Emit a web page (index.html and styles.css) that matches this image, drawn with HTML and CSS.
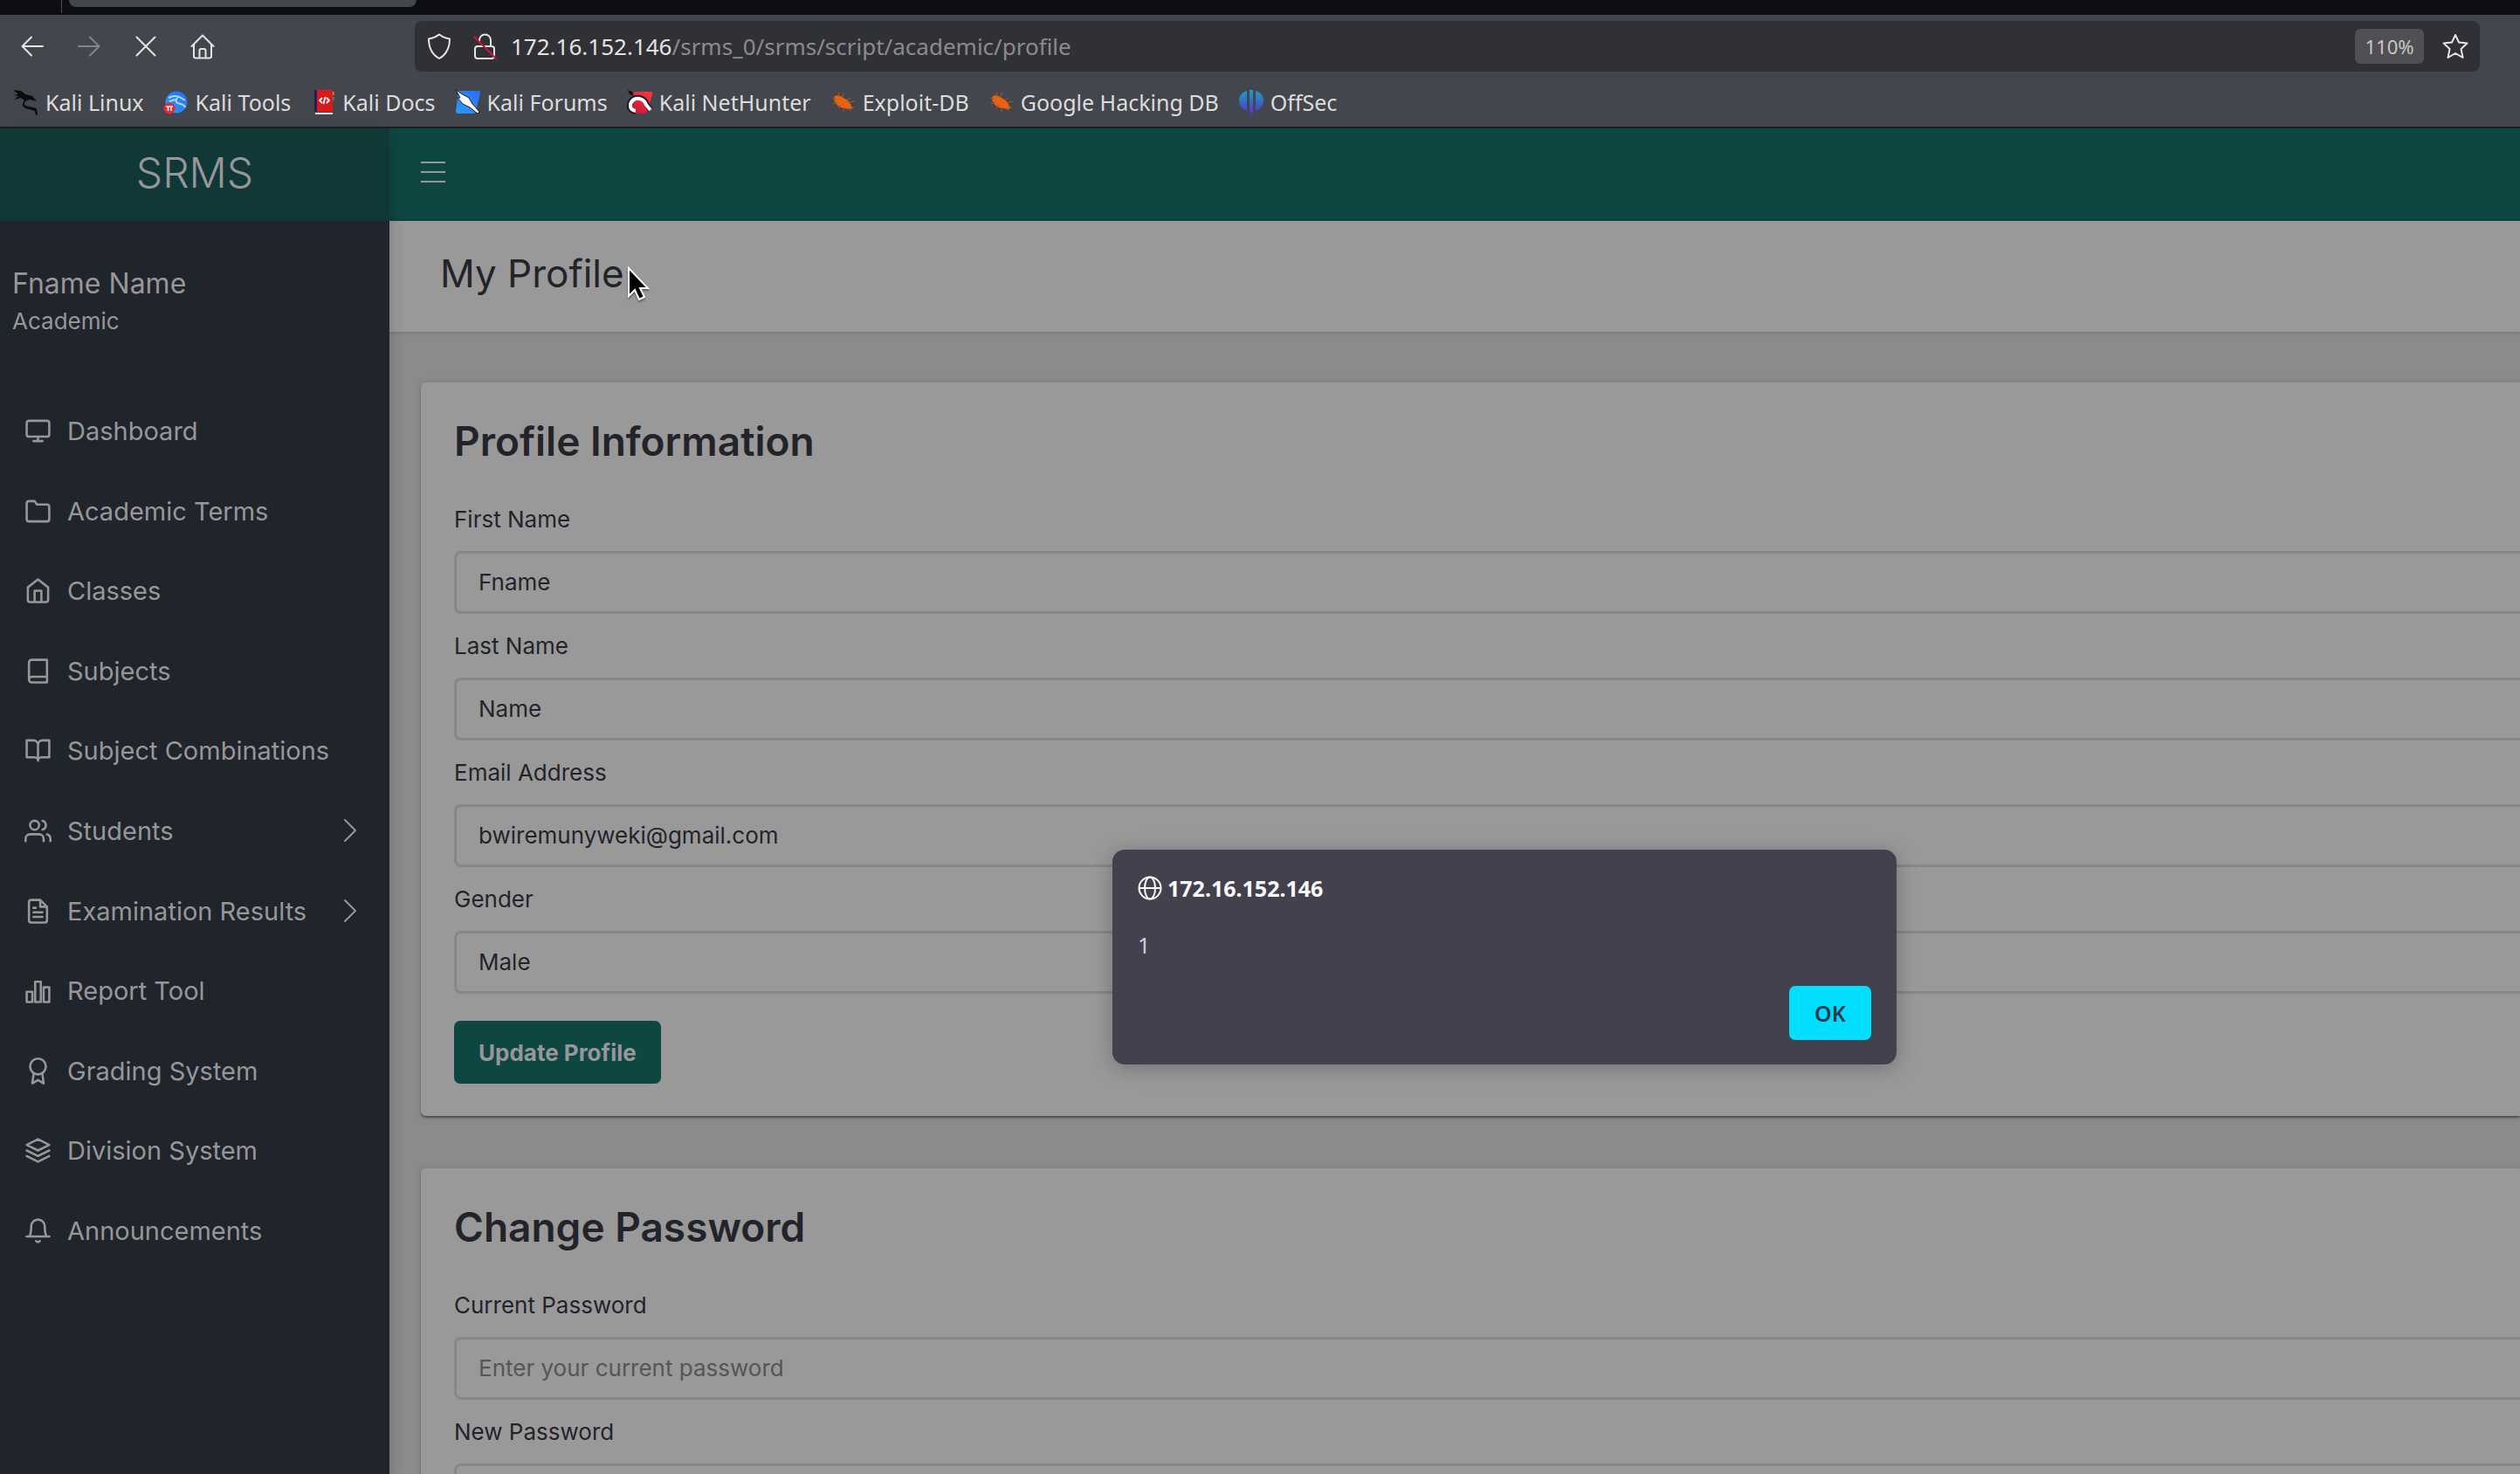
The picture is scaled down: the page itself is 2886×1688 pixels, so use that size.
FILE: index.html
```html
<!DOCTYPE html>
<html lang="en">
<head>
<meta charset="utf-8">
<title>My Profile - SRMS</title>
<link rel="stylesheet" href="styles.css">
</head>
<body>
<svg class="defs" aria-hidden="true">
  <defs>
    <linearGradient id="blue" x1="1" y1="0" x2="0" y2="1"><stop offset="0" stop-color="#2a6cf5"/><stop offset="1" stop-color="#2a9df5"/></linearGradient>
    <linearGradient id="red" x1="1" y1="0" x2="0" y2="1"><stop offset="0" stop-color="#ff3a3a"/><stop offset="1" stop-color="#c0103c"/></linearGradient>
    <linearGradient id="violet" x1="0" y1="0" x2="0" y2="1"><stop offset="0" stop-color="#17a2bd"/><stop offset="1" stop-color="#5b2bd0"/></linearGradient>
    <symbol id="bug" viewBox="0 0 30 30"><path d="M5 8q5-2 10 2q7 3 10 12q-3 2-7 0q-8 0-12-6q-3-4-1-8z" fill="#eb6112"/><path d="M2 10l5 2M3 17l5-2M9 22l3-4M15 26l1-5M23 25l-1-4M27 22l-4-3M28 14l-6 1M23 10l-4 3M16 4l-3 6M9 4l1 5" stroke="#b0562a" stroke-width="1" fill="none"/></symbol>
    <symbol id="chevron" viewBox="0 0 18 28"><path d="M3 2l12 12L3 26" fill="none" stroke="currentColor" stroke-width="2"/></symbol>
  </defs>
</svg>

<header class="browser">
  <div class="tabs"><span class="tab-divider"></span><span class="tab"></span></div>
  <div class="toolbar">
    <div class="nav-buttons">
      <button type="button" aria-label="Back"><svg viewBox="0 0 32 32"><path d="M28 16H5M15 5.500L4.500 16 15 26.500"/></svg></button>
      <button type="button" aria-label="Forward" disabled><svg viewBox="0 0 32 32"><path d="M4 16h23M17 5.500L27.500 16 17 26.500"/></svg></button>
      <button type="button" aria-label="Stop"><svg viewBox="0 0 32 32"><path d="M5.500 5.500l21 21M26.500 5.500l-21 21"/></svg></button>
      <button type="button" aria-label="Home"><svg viewBox="0 0 32 32"><path d="M3.500 16L16 3.500 28.500 16M6 14v13.500a2 2 0 0 0 2 2h16a2 2 0 0 0 2-2V14M12.500 29v-8a2 2 0 0 1 2-2h3a2 2 0 0 1 2 2v8"/></svg></button>
    </div>
    <div class="urlbar">
      <div class="url-group">
        <svg class="url-icon" viewBox="0 0 32 32"><path d="M16 2.500c4 3 8 4.500 12 5 0 10-3 17.500-12 22.500C7 25 4 17.500 4 7.500c4-.5 8-2 12-5z"/></svg>
        <svg class="url-icon" viewBox="0 0 32 32"><path d="M10 10V9a6.500 6.500 0 0 1 13 0v7M7 16h17a3 3 0 0 1 3 3v8a3 3 0 0 1-3 3H8a3 3 0 0 1-3-3v-8a3 3 0 0 1 3-3z"/><path class="slash" d="M4 5l25 25"/></svg>
      </div>
      <div class="url" role="textbox" aria-label="Address"><span class="host">172.16.152.146</span>/srms_0/srms/script/academic/profile</div>
      <div class="url-group">
        <button type="button" class="zoom">110%</button>
        <button type="button" class="star" aria-label="Bookmark"><svg class="url-icon" viewBox="0 0 32 32"><path d="M16 3l4 8.500 9.500 1-7 6.500 2 10L16 24l-8.500 5 2-10-7-6.500 9.500-1z"/></svg></button>
      </div>
    </div>
  </div>
  <nav class="bookmarks">
    <a href="#"><svg viewBox="0 0 30 30"><path d="M0 1l9 1 5 4 8 2 5 6-8-2-3 1q-5 3-2 6l9 2q5 2 5 8l-3-4-11-3q-6-4-1-9l-4-3-8 2 5-4-6-1 6-1z" fill="#0b0c0e"/><path d="M24 22l3 8-1-8z" fill="#0b0c0e" stroke="#0b0c0e"/></svg>Kali Linux</a>
    <a href="#"><svg viewBox="0 0 30 30"><circle cx="15" cy="15" r="12.500" fill="url(#blue)"/><path d="M6 10q8-4 14 0l5 3M16 10q-4 6 4 7 4 1 5 4M7 14l7-2" fill="none" stroke="#a9dcff" stroke-width="2"/><circle cx="7" cy="22" r="6.500" fill="#e8282e"/><path d="M3 20h8M5.500 20v5M9 20v5" stroke="#fff" stroke-width="1.500"/></svg>Kali Tools</a>
    <a href="#"><svg viewBox="0 0 30 30"><path d="M5 1h21v25H5z" fill="#d9191b"/><path d="M5 1h3v25H5z" fill="#1c2158"/><path d="M26 3h1.500v4H26z" fill="#e88a1c"/><path d="M26 9h1.500v4H26z" fill="#3aa14c"/><path d="M6 27h20v2H6z" fill="#e8e3e3"/><path d="M14 10l-3 3 3 3M17.500 9l-2 8M19 10l3 3-3 3" stroke="#fff" stroke-width="1.800" fill="none"/></svg>Kali Docs</a>
    <a href="#"><svg viewBox="0 0 30 30"><path d="M4 2h23q3 0 2 3l-5 20q-1 3-3 3H4q-3 0-3-3z" fill="url(#blue)"/><path d="M1 1l6 4 9 5 4 7 8 9-2 2-9-7-8-4-6-7 3 0z" fill="#fff" stroke="#1b1d22" stroke-width="1"/></svg>Kali Forums</a>
    <a href="#"><svg viewBox="0 0 30 30"><path d="M8 3h19q3 0 2 3l-5 18q-1 4-4 4H4q-3 0-3-3z" fill="url(#red)"/><path d="M1 1l5 2 2 5-5-2z" fill="#111"/><path d="M10 26q-8-1-7-9 3-8 11-7 7 1 9 8l4 6" fill="none" stroke="#181a1e" stroke-width="6"/><path d="M10 25q-7-1-6-8 3-7 10-6 6 1 8 7l5 6" fill="none" stroke="#fff" stroke-width="4"/></svg>Kali NetHunter</a>
    <a href="#"><svg><use href="#bug"/></svg>Exploit-DB</a>
    <a href="#"><svg><use href="#bug"/></svg>Google Hacking DB</a>
    <a href="#"><svg viewBox="0 0 30 30"><path d="M10 2v23C4 23 1 18 1 13S4 4 10 2zM20 2v23c6-2 9-7 9-12s-3-9-9-11zM13 1h4v25l-2 4-2-4z" fill="url(#violet)"/></svg>OffSec</a>
  </nav>
</header>

<div class="app">
  <aside class="sidebar">
    <a class="logo" href="#">SRMS</a>
    <div class="user"><p class="user-name">Fname Name</p><p class="user-role">Academic</p></div>
    <nav>
      <ul class="menu">
        <li><a href="#"><svg viewBox="0 0 24 24"><rect x="2" y="3" width="20" height="14" rx="2"/><path d="M8 21h8M12 17v4"/></svg><span>Dashboard</span></a></li>
        <li><a href="#"><svg viewBox="0 0 24 24"><path d="M22 19a2 2 0 0 1-2 2H4a2 2 0 0 1-2-2V5a2 2 0 0 1 2-2h5l2 3h9a2 2 0 0 1 2 2z"/></svg><span>Academic Terms</span></a></li>
        <li><a href="#"><svg viewBox="0 0 24 24"><path d="M3 9l9-7 9 7v11a2 2 0 0 1-2 2H5a2 2 0 0 1-2-2zM9 22V12h6v10"/></svg><span>Classes</span></a></li>
        <li><a href="#"><svg viewBox="0 0 24 24"><path d="M4 19.500A2.500 2.500 0 0 1 6.500 17H20M6.500 2H20v20H6.500A2.500 2.500 0 0 1 4 19.500v-15A2.500 2.500 0 0 1 6.500 2z"/></svg><span>Subjects</span></a></li>
        <li><a href="#"><svg viewBox="0 0 24 24"><path d="M2 3h6a4 4 0 0 1 4 4v14a3 3 0 0 0-3-3H2zM22 3h-6a4 4 0 0 0-4 4v14a3 3 0 0 1 3-3h7z"/></svg><span>Subject Combinations</span></a></li>
        <li><a href="#"><svg viewBox="0 0 24 24"><path d="M17 21v-2a4 4 0 0 0-4-4H5a4 4 0 0 0-4 4v2M23 21v-2a4 4 0 0 0-3-3.870M16 3.130a4 4 0 0 1 0 7.750"/><circle cx="9" cy="7" r="4"/></svg><span>Students</span><svg class="chevron"><use href="#chevron"/></svg></a></li>
        <li><a href="#"><svg viewBox="0 0 24 24"><path d="M14 2H6a2 2 0 0 0-2 2v16a2 2 0 0 0 2 2h12a2 2 0 0 0 2-2V8zM14 2v6h6M16 13H8M16 17H8M10 9H8"/></svg><span>Examination Results</span><svg class="chevron"><use href="#chevron"/></svg></a></li>
        <li><a href="#"><svg viewBox="0 0 24 24"><path d="M2 13h5v9H2zM9.500 4h5v18h-5zM17 9h5v13h-5z"/></svg><span>Report Tool</span></a></li>
        <li><a href="#"><svg viewBox="0 0 24 24"><circle cx="12" cy="8" r="7"/><path d="M8.200 13.900L7 23l5-3 5 3-1.200-9.100"/></svg><span>Grading System</span></a></li>
        <li><a href="#"><svg viewBox="0 0 24 24"><path d="M12 2L2 7l10 5 10-5zM2 17l10 5 10-5M2 12l10 5 10-5"/></svg><span>Division System</span></a></li>
        <li><a href="#"><svg viewBox="0 0 24 24"><path d="M18 8A6 6 0 0 0 6 8c0 5-.5 7-1.500 9H2h20h-2.500C18.500 15 18 13 18 8M13.700 21a2 2 0 0 1-3.400 0"/></svg><span>Announcements</span></a></li>
      </ul>
    </nav>
  </aside>

  <div class="content">
    <div class="topbar"><button type="button" class="menu-toggle" aria-label="Toggle menu"><span></span><span></span><span></span></button></div>
    <div class="title-bar"><h1>My Profile</h1></div>
    <main>
      <form class="card">
        <h2>Profile Information</h2>
        <label for="fname">First Name</label>
        <input id="fname" type="text" value="Fname">
        <label for="lname">Last Name</label>
        <input id="lname" type="text" value="Name">
        <label for="email">Email Address</label>
        <input id="email" type="email" value="bwiremunyweki@gmail.com">
        <label for="gender">Gender</label>
        <select id="gender"><option>Male</option><option>Female</option></select>
        <button type="submit" class="primary">Update Profile</button>
      </form>
      <form class="card">
        <h2>Change Password</h2>
        <label for="current">Current Password</label>
        <input id="current" type="password" placeholder="Enter your current password">
        <label for="new">New Password</label>
        <input id="new" type="password" placeholder="Enter your new password">
      </form>
    </main>
  </div>
</div>

<section class="alert" role="alertdialog" aria-labelledby="alert-title">
  <h3 id="alert-title"><svg viewBox="0 0 28 28"><circle cx="14" cy="14" r="12.500"/><ellipse cx="14" cy="14" rx="6" ry="12.500"/><path d="M1.500 14h25"/></svg>172.16.152.146</h3>
  <p>1</p>
  <button type="button">OK</button>
</section>
<svg class="cursor" viewBox="0 0 26 40" aria-hidden="true"><path d="M2 2v32l7-7 5 11 6-3-5-10h9z" fill="#000" stroke="#fff" stroke-width="2"/></svg>
</body>
</html>
```
FILE: styles.css
```css
* { box-sizing: border-box; }
body {
  margin: 0;
  height: 100vh;
  overflow: hidden;
  display: flex;
  flex-direction: column;
  background: #8b8b8c;
  color: #23242a;
  font-family: Inter, "Liberation Sans", sans-serif;
  font-size: 26px;
}
h1, h2, h3, p, ul { margin: 0; padding: 0; }
ul { list-style: none; }
a { color: inherit; text-decoration: none; }
button { border: 0; padding: 0; background: none; color: inherit; font: inherit; }
svg { display: block; flex: none; }
.defs { position: absolute; width: 0; height: 0; }

/* browser chrome */
.browser {
  background: #44464d;
  color: #dcdcdc;
  font-family: "Noto Sans", sans-serif;
  font-size: 25px;
  border-bottom: 2px solid #1b1f20;
}
.tabs {
  display: flex;
  align-items: flex-start;
  gap: 8px;
  height: 17px;
  padding-left: 70px;
  background: #0d0e12;
}
.tab-divider { width: 1px; height: 15px; background: #4a4b50; }
.tab { width: 398px; height: 8px; border-radius: 0 0 8px 8px; background: #44464d; }
.toolbar { display: flex; align-items: center; padding: 7px 46px 7px 21px; }
.nav-buttons { display: flex; gap: 33px; width: 454px; }
.nav-buttons svg, .url-icon {
  width: 32px;
  height: 32px;
  fill: none;
  stroke: #e4e4e2;
  stroke-width: 2;
  stroke-linejoin: round;
  stroke-linecap: round;
}
.nav-buttons button:disabled { opacity: .4; }
.urlbar {
  flex: 1;
  display: flex;
  align-items: center;
  gap: 14px;
  height: 58px;
  padding: 0 12px;
  border-radius: 8px;
  background: #303136;
}
.url-group { display: flex; align-items: center; gap: 20px; }
.url { flex: 1; color: #8b8b8d; font-size: 26px; }
.host { color: #e4e4e2; }
.url-icon .slash { stroke: #d0103a; }
.zoom {
  width: 79px;
  height: 40px;
  border-radius: 6px;
  background: #504f54;
  color: #c8c8c6;
  font-size: 22px;
}
.bookmarks {
  display: flex;
  align-items: center;
  gap: 22px;
  height: 56px;
  padding: 0 15px;
}
.bookmarks a { display: flex; align-items: center; gap: 7px; white-space: nowrap; }
.bookmarks svg { width: 30px; height: 30px; }

/* application */
.app { flex: 1; min-height: 0; display: flex; }
.sidebar {
  position: relative;
  width: 446px;
  flex: none;
  background: #20242b;
  color: #97979a;
  box-shadow: 0 8px 17px rgba(0, 0, 0, .2);
}
.logo {
  display: flex;
  align-items: center;
  justify-content: center;
  height: 106px;
  padding-bottom: 6px;
  background: #0f3836;
  font-size: 48px;
  font-weight: 300;
}
.user { padding: 50px 14px 59px; }
.user-name { font-size: 32px; line-height: 44px; }
.user-role { line-height: 42px; }
.menu { display: grid; grid-auto-rows: 1fr; min-height: 1007px; font-size: 29px; }
.menu a { display: flex; align-items: center; gap: 18px; height: 100%; padding: 0 36px 0 28px; }
.menu span { flex: 1; white-space: nowrap; }
.menu svg {
  width: 31px;
  height: 31px;
  fill: none;
  stroke: currentColor;
  stroke-width: 2;
  stroke-linejoin: round;
  stroke-linecap: round;
}
.menu .chevron { width: 18px; height: 28px; }
.content { flex: 1; min-width: 0; }
.topbar { display: flex; align-items: center; height: 106px; padding: 0 36px 6px; background: #0e4642; }
.menu-toggle { display: grid; gap: 9px; width: 28px; }
.menu-toggle span { height: 2px; background: #97979a; }
.title-bar {
  display: flex;
  align-items: center;
  height: 127px;
  padding: 0 58px 8px;
  background: #99999a;
  box-shadow: 0 1px 4px rgba(0, 0, 0, .2);
}
h1 { font-size: 44px; font-weight: 400; }
main { display: grid; gap: 60px; padding: 58px 0 60px 36px; }
.card {
  display: flex;
  flex-direction: column;
  padding: 37px 0 37px 38px;
  border-radius: 6px 0 0 6px;
  background: #99999a;
  box-shadow: 0 2px 2px rgba(0, 0, 0, .24), 0 3px 2px -1px rgba(0, 0, 0, .2), 0 1px 8px rgba(0, 0, 0, .12);
}
h2 { margin-bottom: 23px; font-size: 46px; font-weight: 600; line-height: 60px; }
label { line-height: 73px; }
input, select {
  width: 100%;
  height: 72px;
  margin: 0;
  padding: 0 25px 2px;
  border: 3px solid #86868c;
  border-right: 0;
  border-radius: 8px 0 0 8px;
  background: transparent;
  color: inherit;
  font: inherit;
  appearance: none;
}
input::placeholder { color: #55555a; opacity: 1; }
.primary {
  align-self: flex-start;
  height: 72px;
  margin-top: 31px;
  padding: 0 28px;
  border-radius: 7px;
  background: #0e4642;
  color: #97979a;
  font-weight: 700;
}

/* alert over the page */
.alert {
  position: absolute;
  left: 1274px;
  top: 973px;
  width: 898px;
  display: flex;
  flex-direction: column;
  gap: 29px;
  padding: 26px 29px 28px;
  border-radius: 14px;
  background: #44414e;
  color: #fbfbfe;
  box-shadow: 0 4px 24px rgba(0, 0, 0, .25);
  font-family: "Noto Sans", sans-serif;
  font-size: 25px;
  line-height: 36px;
}
.alert h3 { display: flex; align-items: center; gap: 6px; font-size: 25px; font-weight: 700; }
.alert h3 svg { width: 28px; height: 28px; fill: none; stroke: currentColor; stroke-width: 2; }
.alert p { color: #d0d0d4; }
.alert button {
  align-self: flex-end;
  width: 94px;
  height: 62px;
  border-radius: 7px;
  background: #00ddff;
  color: #2b3a4a;
  font-weight: 600;
}
.cursor { position: absolute; left: 718px; top: 305px; width: 26px; height: 40px; filter: drop-shadow(0 2px 1px rgba(0, 0, 0, .4)); }
```
